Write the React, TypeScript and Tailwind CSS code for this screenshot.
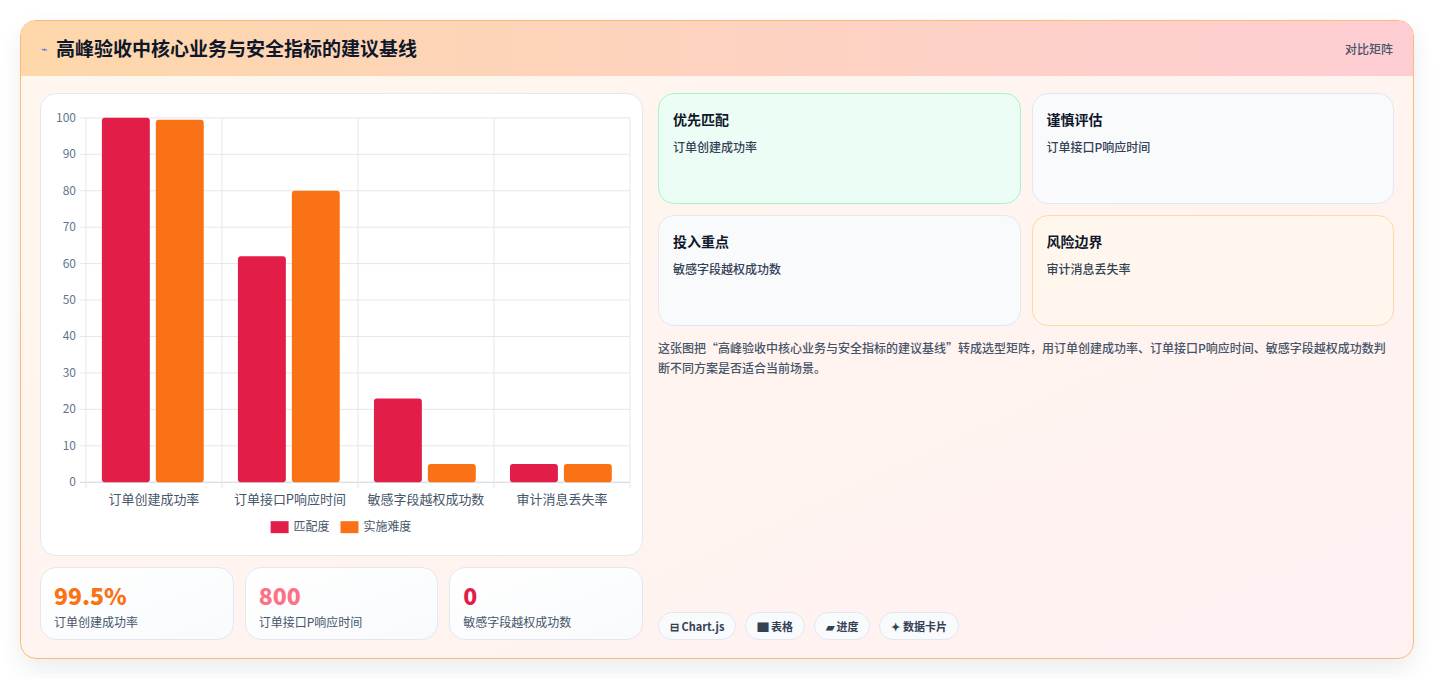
import React from "react";

const cats = [
  { name: "订单创建成功率", a: 100, b: 99.5 },
  { name: "订单接口P响应时间", a: 62, b: 80 },
  { name: "敏感字段越权成功数", a: 23, b: 5 },
  { name: "审计消息丢失率", a: 5, b: 5 },
];

function Chart() {
  const L = 45, R = 590, T = 23, B = 388;
  const cw = (R - L) / 4;
  const y = (v: number) => B - ((B - T) * v) / 100;
  return (
    <svg viewBox="0 0 602 460" className="w-full h-full" style={{ fontFamily: "'Noto Sans CJK SC', 'Liberation Sans', sans-serif" }}>
      {[0, 10, 20, 30, 40, 50, 60, 70, 80, 90, 100].map((v) => (
        <g key={v}>
          <line x1={L - 6} x2={R} y1={y(v)} y2={y(v)} stroke={v === 0 ? "#cbd5e1" : "#e5e7eb"} />
          <text x={L - 10} y={y(v) + 4} textAnchor="end" fontSize="12" fill="#64748b">{v}</text>
        </g>
      ))}
      {[0, 1, 2, 3, 4].map((i) => (
        <line key={i} x1={L + cw * i} x2={L + cw * i} y1={T} y2={B + 6} stroke="#e5e7eb" />
      ))}
      {cats.map((c, i) => {
        const x0 = L + cw * i + 16;
        return (
          <g key={c.name}>
            <rect x={x0} y={y(c.a)} width={48} height={B - y(c.a)} rx={3} fill="#e11d48" />
            <rect x={x0 + 54} y={y(c.b)} width={48} height={B - y(c.b)} rx={3} fill="#f97316" />
            <text x={L + cw * i + cw / 2} y={410} textAnchor="middle" fontSize="13" fill="#475569">{c.name}</text>
          </g>
        );
      })}
      <rect x={230} y={427} width={18} height={12} fill="#e11d48" />
      <text x={253} y={437} fontSize="12" fill="#475569">匹配度</text>
      <rect x={300} y={427} width={18} height={12} fill="#f97316" />
      <text x={323} y={437} fontSize="12" fill="#475569">实施难度</text>
    </svg>
  );
}

function Stat({ v, label, color }: { v: string; label: string; color: string }) {
  return (
    <div className="flex-1 bg-gradient-to-br from-white to-[#f8fafc] border border-[#e2e8f0] rounded-2xl px-[13px] pt-[12px] h-[73px]">
      <div className={`text-[23px] leading-[30px] font-extrabold ${color}`}>{v}</div>
      <div className="text-[12px] text-[#475569] mt-[3px]">{label}</div>
    </div>
  );
}

function Box({ title, text, cls }: { title: string; text: string; cls: string }) {
  return (
    <div className={`h-[111px] rounded-2xl border px-[14px] pt-[15px] ${cls}`}>
      <div className="text-[14px] font-bold text-[#0f172a]">{title}</div>
      <div className="text-[12px] text-[#334155] mt-[8px] font-medium">{text}</div>
    </div>
  );
}

export default function App() {
  return (
    <div className="min-h-screen bg-white p-[20px] pr-[21px]" style={{ fontFamily: "'Noto Sans CJK SC', 'Liberation Sans', sans-serif" }}>
      <div className="rounded-2xl border border-[#fdba74] overflow-hidden shadow-[0_10px_25px_rgba(0,0,0,0.08)] bg-gradient-to-br from-[#fff7ed] to-[#fff1f2]">
        <div className="h-[55px] flex items-center justify-between px-[20px] bg-gradient-to-r from-[#fed7aa] to-[#fecdd3]">
          <div className="flex items-center gap-[8px]">
            <span className="text-[11px] text-[#6366f1]">⌁</span>
            <span className="text-[19px] font-bold text-[#0f172a]">高峰验收中核心业务与安全指标的建议基线</span>
          </div>
          <span className="text-[12px] text-[#475569] font-medium">对比矩阵</span>
        </div>
        <div className="flex gap-[15px] px-[19px] pt-[17px] pb-[18px]">
          <div className="w-[603px] flex flex-col gap-[11px]">
            <div className="h-[463px] bg-white rounded-2xl border border-[#e2e8f0]">
              <Chart />
            </div>
            <div className="flex gap-[11px]">
              <Stat v="99.5%" label="订单创建成功率" color="text-[#f97316]" />
              <Stat v="800" label="订单接口P响应时间" color="text-[#fb7185]" />
              <Stat v="0" label="敏感字段越权成功数" color="text-[#e11d48]" />
            </div>
          </div>
          <div className="flex-1 flex flex-col">
            <div className="grid grid-cols-2 gap-x-[11px] gap-y-[11px]">
              <Box title="优先匹配" text="订单创建成功率" cls="bg-[#ecfdf5] border-[#a7f3d0]" />
              <Box title="谨慎评估" text="订单接口P响应时间" cls="bg-[#f8fafc] border-[#e2e8f0]" />
              <Box title="投入重点" text="敏感字段越权成功数" cls="bg-[#f8fafc] border-[#e2e8f0]" />
              <Box title="风险边界" text="审计消息丢失率" cls="bg-[#fff7ed] border-[#fed7aa]" />
            </div>
            <p className="mt-[12px] text-[12px] leading-[20px] text-[#475569] font-medium">
              这张图把“高峰验收中核心业务与安全指标的建议基线”转成选型矩阵，用订单创建成功率、订单接口P响应时间、敏感字段越权成功数判断不同方案是否适合当前场景。
            </p>
            <div className="mt-auto flex gap-[9px]">
              {["⊟ Chart.js", "▇ 表格", "▰ 进度", "✦ 数据卡片"].map((t) => (
                <span key={t} className="h-[28px] px-[11px] flex items-center rounded-full bg-[#f8fafc] border border-[#e2e8f0] text-[11px] font-bold text-[#334155]">{t}</span>
              ))}
            </div>
          </div>
        </div>
      </div>
    </div>
  );
}
